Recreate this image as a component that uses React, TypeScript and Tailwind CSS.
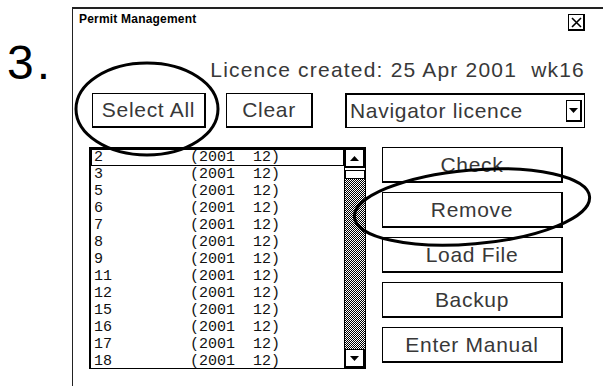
const rows = ["2", "3", "5", "6", "7", "8", "9", "11", "12", "15", "16", "17", "18"];

const sideButtons = ["Check", "Remove", "Load File", "Backup", "Enter Manual"];

const Btn = ({ label, className }: { label: string; className: string }) => (
  <div
    className={`flex items-center justify-center border-t border-l border-r-2 border-b-2 border-black bg-white text-[21px] tracking-[0.7px] text-[#383838] ${className}`}
  >
    {label}
  </div>
);

const Arrow = ({ down }: { down?: boolean }) => (
  <div className="flex h-[19px] items-center justify-center border-t border-l border-r-2 border-b-2 border-black bg-white">
    <svg width="9" height="5" viewBox="0 0 9 5">
      <polygon points={down ? "0,0 9,0 4.5,5" : "0,5 9,5 4.5,0"} fill="#000" />
    </svg>
  </div>
);

const App = () => {
  return (
    <div className="relative h-[386px] w-[603px] overflow-hidden bg-white font-['Liberation_Sans',Arial,sans-serif] text-black">
      <div className="flex items-start pt-[7px]">
        <div className="w-[72px] pl-[7px] pt-[32px] text-[48px] leading-none tracking-[3px]">3.</div>

        <div className="h-[400px] w-[531px] border-t-2 border-l border-[#222] pl-[16px] pr-[18px]">
          {/* title */}
          <div className="flex items-start justify-between">
            <div className="-ml-[10px] mt-[3px] text-[12px] font-bold leading-[14px] tracking-[0.2px]">Permit Management</div>
            <div className="mt-[5px] flex h-[17px] w-[17px] items-center justify-center border-t border-l border-r-2 border-b-2 border-black">
              <svg width="11" height="11" viewBox="0 0 11 11">
                <path d="M1 1 L10 10 M10 1 L1 10" stroke="#000" strokeWidth="1.6" />
              </svg>
            </div>
          </div>

          <div className="mt-[27px] text-right text-[21px] leading-[24px] tracking-[1.2px] text-[#383838]">
            Licence created: 25 Apr 2001&nbsp;&nbsp;wk16
          </div>

          {/* top buttons */}
          <div className="mt-[11px] flex items-center">
            <Btn label="Select All" className="ml-[3px] h-[35px] w-[114px]" />
            <Btn label="Clear" className="ml-[20px] h-[35px] w-[87px]" />
            <div className="ml-[32px] flex h-[35px] flex-1 items-center border-t-2 border-l-2 border-b border-r border-black pl-[3px] pr-[2px]">
              <span className="flex-1 text-[21px] tracking-[0.7px] text-[#383838]">Navigator licence</span>
              <div className="flex h-[22px] w-[16px] items-center justify-center border-t border-l border-r-2 border-b-2 border-black">
                <svg width="9" height="5" viewBox="0 0 9 5">
                  <polygon points="0,0 9,0 4.5,5" fill="#000" />
                </svg>
              </div>
            </div>
          </div>

          {/* list + actions */}
          <div className="mt-[19px] flex items-start">
            <div className="flex h-[222px] w-[277px] border-t-2 border-l-2 border-b border-r border-black">
              <div className="flex-1 font-['Liberation_Mono','DejaVu_Sans_Mono',monospace] text-[15px] leading-[17px] text-[#111]">
                {rows.map((r, i) => (
                  <div key={r} className={`flex h-[17px] items-center pl-[2px] ${i === 0 ? "border border-black" : "border border-transparent"}`}>
                    <span className="w-[96px]">{r}</span>
                    <span className="whitespace-pre">(2001  12)</span>
                  </div>
                ))}
              </div>
              <div className="flex w-[21px] flex-col border-l border-black">
                <Arrow />
                <div className="mt-[2px] h-[9px] border border-black bg-white" />
                <div className="flex-1 bg-[repeating-conic-gradient(#000_0_25%,#fff_0_50%)] bg-[length:2px_2px]" />
                <Arrow down />
              </div>
            </div>

            <div className="ml-[16px] flex w-[181px] flex-col gap-[9px]">
              {sideButtons.map((b) => (
                <Btn key={b} label={b} className="h-[36px]" />
              ))}
            </div>
          </div>
        </div>
      </div>

      {/* hand-drawn highlight ellipses */}
      <svg className="pointer-events-none absolute left-0 top-0" width="603" height="386">
        <ellipse cx="147" cy="109" rx="71" ry="46" fill="none" stroke="#000" strokeWidth="3" />
        <ellipse cx="472" cy="207" rx="118" ry="37" fill="none" stroke="#000" strokeWidth="3" transform="rotate(-5 472 207)" />
      </svg>
    </div>
  );
};

export default App;
